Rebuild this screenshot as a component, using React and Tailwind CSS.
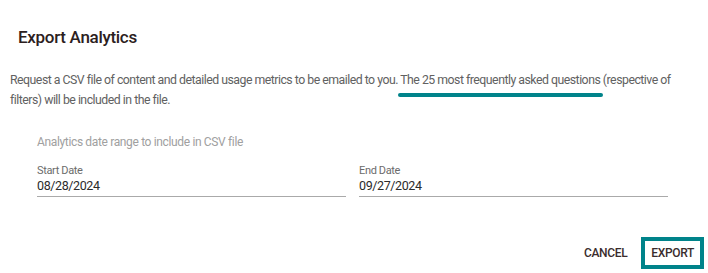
export default function App() {
  return (
    <div className="w-[708px] h-[273px] bg-white font-['Roboto',sans-serif] flex flex-col">
      <h2 className="pt-[27px] pl-[18px] text-[17px] leading-[20px] font-medium tracking-[-0.3px] text-[#2b2020]">
        Export Analytics
      </h2>

      <p className="mt-[23px] px-[10px] text-[12.3px] leading-[20px] tracking-[-0.5px] text-[#616161]">
        Request a CSV file of content and detailed usage metrics to be emailed to you.{" "}
        <span className="relative after:absolute after:left-[-2px] after:right-[-3px] after:bottom-[-10px] after:h-[4px] after:rounded-full after:bg-[#00838a]">
          The 25 most frequently asked questions
        </span>{" "}
        (respective of filters) will be included in the file.
      </p>

      <div className="mt-[24px] pl-[37px] pr-[40px]">
        <div className="text-[12px] leading-[16px] tracking-[-0.35px] text-[#a0a0a0]">
          Analytics date range to include in CSV file
        </div>
        <div className="mt-[14px] flex gap-[13px]">
          <DateField label="Start Date" value="08/28/2024" />
          <DateField label="End Date" value="09/27/2024" />
        </div>
      </div>

      <div className="mt-auto mb-[4px] mr-[4px] flex items-center justify-end gap-[14px]">
        <button className="text-[12px] font-medium tracking-[-0.35px] text-[#3a2c2c]">CANCEL</button>
        <button className="h-[32px] px-[6px] border-[4px] border-[#00838a] text-[12px] font-medium tracking-[-0.35px] text-[#3a2c2c]">
          EXPORT
        </button>
      </div>
    </div>
  );
}

function DateField({ label, value }) {
  return (
    <div className="w-[309px] border-b border-[#aaaaaa] pb-[2px]">
      <div className="text-[11px] leading-[14px] tracking-[-0.35px] text-[#6b6b6b]">{label}</div>
      <div className="text-[12.5px] leading-[16px] tracking-[-0.4px] text-[#2b2b2b]">{value}</div>
    </div>
  );
}
